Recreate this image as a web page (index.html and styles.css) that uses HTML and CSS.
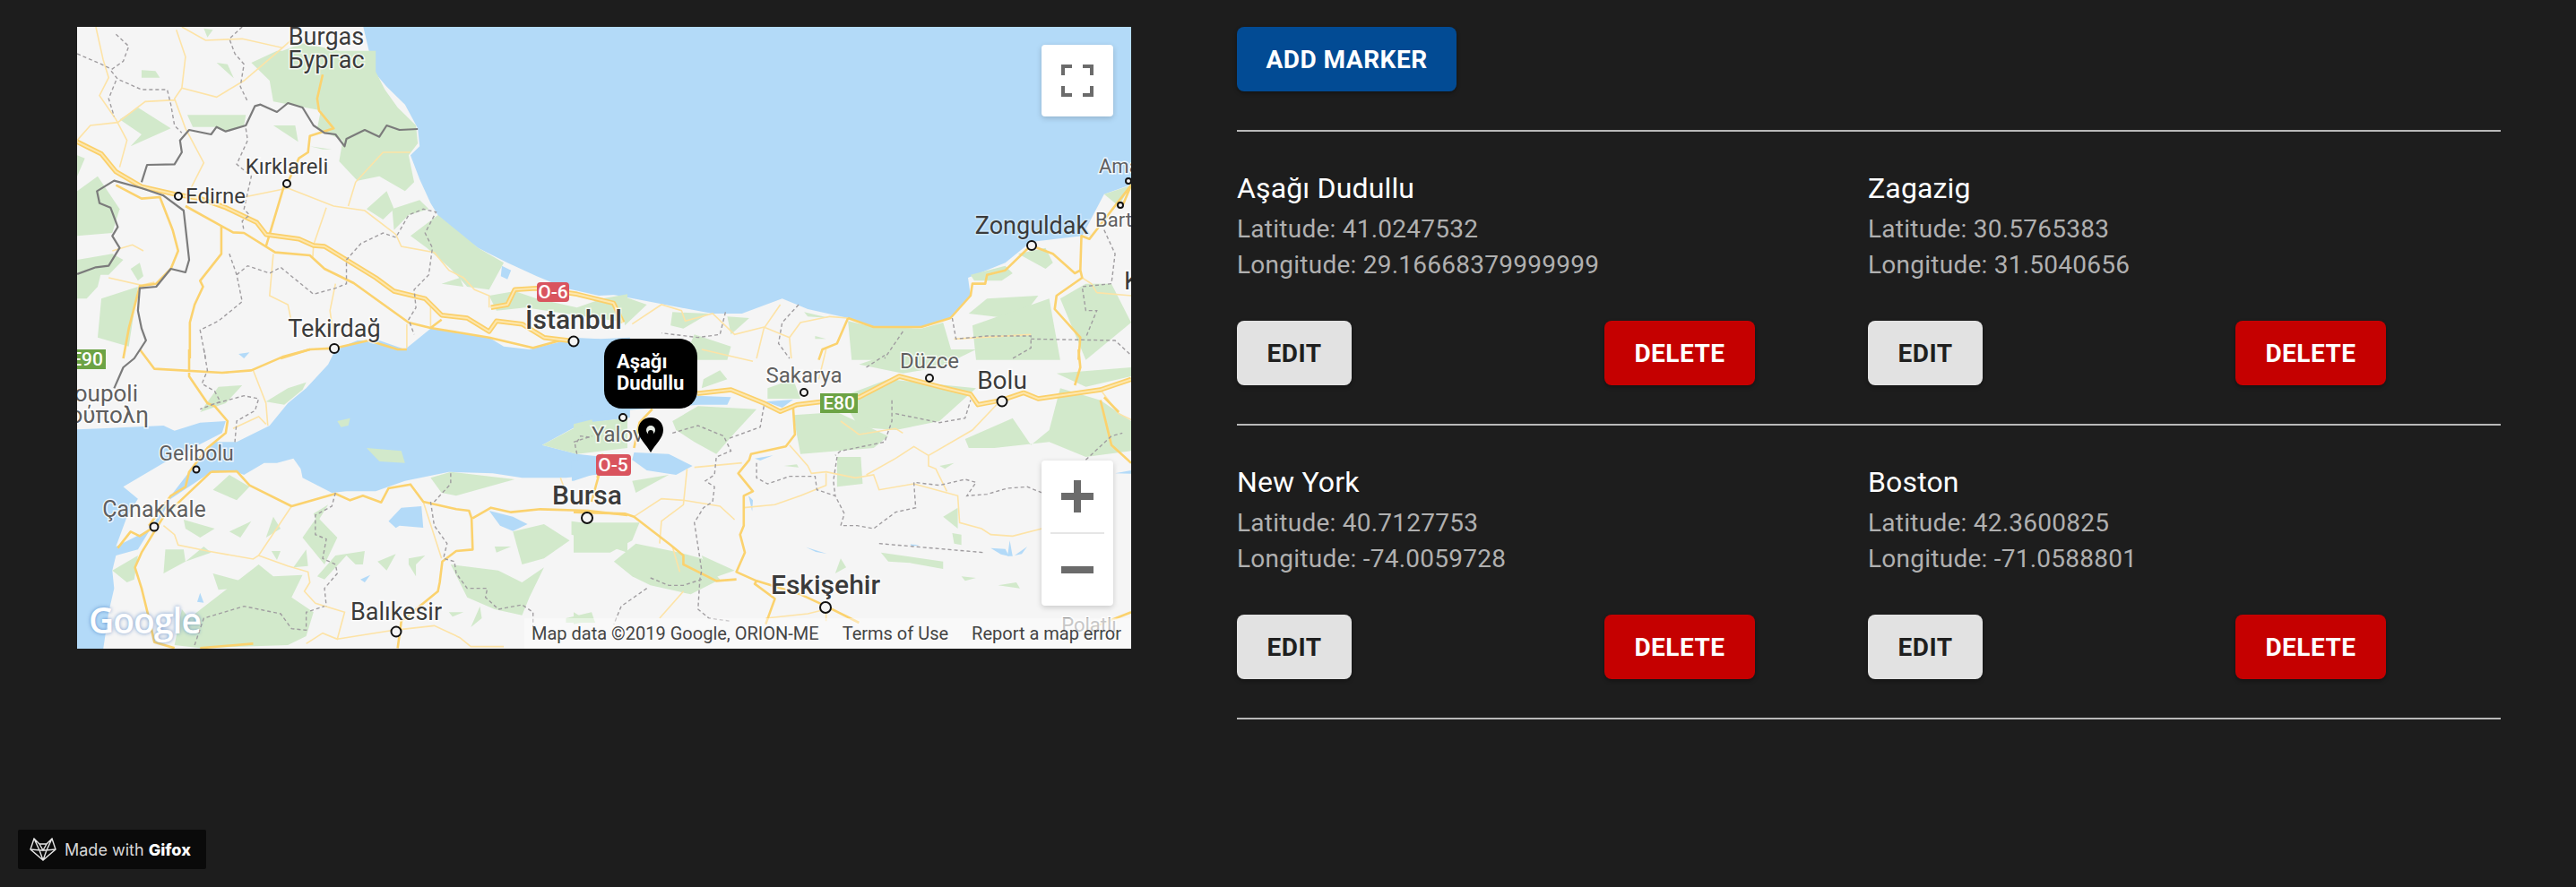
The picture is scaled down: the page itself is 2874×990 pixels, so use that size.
FILE: index.html
```html
<!DOCTYPE html>
<html lang="en">
<head>
<meta charset="utf-8">
<title>Map markers</title>
<link rel="stylesheet" href="styles.css">
</head>
<body>
<main class="page">
  <section class="map">
    <svg class="map-art" viewBox="86 30 1176 694" width="1176" height="694">
      <rect class="land" x="86" y="30" width="1176" height="694"/>
      <g class="water">
        <g transform="translate(60,0) scale(.40816,.33333)">
          <polygon points="845,85 875,240 910,290 960,350 995,430 1000,490 975,520 1000,600 1030,680 1060,740 1160,830 1240,880 1320,925 1400,965 1490,990 1575,985 1575,85"/>
          <polygon points="1225,890 1250,905 1240,935 1222,925"/>
        </g>
        <g transform="translate(640,0) scale(.40816,.33333)">
          <polygon points="-5,965 40,975 100,985 250,1020 380,1050 460,1050 570,1000 640,1035 750,1065 820,1095 950,1095 1030,1065 1085,990 1078,930 1180,880 1250,810 1390,790 1450,650 1530,615 1530,85 -5,85"/>
        </g>
        <g transform="translate(60,390) scale(.40816,.33333)">
          <polygon points="60,268 130,265 300,255 330,272 400,245 470,240 460,280 300,380 190,460 230,500 200,560 170,660 235,620 280,590 320,500 430,410 500,410 520,420 575,380 610,380 655,365 675,400 680,430 760,480 800,475 880,475 960,440 1080,410 1200,415 1280,430 1400,430 1480,420 1568,410 1575,370 1430,350 1335,320 1440,250 1575,228 1575,-40 1400,-30 1300,0 1230,-10 1190,-40 1030,-70 960,0 890,-30 830,-30 770,0 750,50 690,130 640,180 590,255 500,310 440,310 370,410 320,490 270,590 230,670 170,690 160,740 165,800 150,880 135,1005 60,1005"/>
          <polygon points="400,815 410,848 392,845"/>
          <polygon points="838,770 865,755 850,780"/>
          <polygon points="915,575 950,530 1005,525 1010,597 945,590 935,598"/>
          <polygon points="1190,540 1255,560 1295,585 1255,608 1220,590"/>
          <polygon points="505,15 535,10 520,30"/>
        </g>
        <g transform="translate(640,390) scale(.40816,.33333)">
          <polygon points="-5,-40 70,-35 120,0 200,100 338,155 430,160 420,185 340,185 300,190 240,195 130,205 0,225 -5,225"/>
          <polygon points="-5,372 60,360 70,385 50,420 0,440 -5,440"/>
          <polygon points="165,345 260,350 325,390 280,420 200,405 160,370"/>
          <polygon points="525,175 600,168 570,195"/>
          <polygon points="495,365 545,355 510,372"/>
          <polygon points="478,490 490,505 488,542"/>
          <polygon points="635,662 692,684 662,678"/>
          <polygon points="1140,665 1180,668 1190,692 1168,686"/>
          <polygon points="1186,692 1192,640 1200,692"/>
          <polygon points="1205,690 1240,660 1225,685"/>
          <polygon points="1480,415 1524,405 1524,416"/>
          <polygon points="920,652 945,655 925,660"/>
        </g>
      </g>
      <g class="green">
        <g transform="translate(60,0) scale(.40816,.33333)">
          <polygon points="625,170 680,145 740,160 780,170 880,170 880,240 905,300 940,360 990,420 995,480 970,520 985,610 960,640 890,590 830,605 780,540 790,470 720,430 730,370 600,340 590,270 540,210 610,170"/>
          <polygon points="240,235 278,238 290,260 240,260"/>
          <polygon points="445,210 475,215 492,262"/>
          <polygon points="410,95 435,100 420,125"/>
          <polygon points="180,400 230,360 320,430 210,490 240,450"/>
          <polygon points="365,385 525,385 520,420 470,440 440,425 380,425"/>
          <polygon points="600,420 660,420 668,475"/>
          <polygon points="700,490 760,500 735,500"/>
          <polygon points="855,700 910,640 930,700 900,735"/>
          <polygon points="925,700 1000,670 1025,700 970,720 930,770"/>
          <polygon points="975,790 1050,720 1160,830 1230,880 1190,970 1130,960 1085,900 1020,830"/>
          <polygon points="1060,950 1110,930 1120,960"/>
          <polygon points="64,520 85,530 64,590"/>
          <polygon points="64,640 120,590 180,700 160,780 64,790"/>
          <polygon points="64,870 160,850 190,870 150,920 64,920"/>
          <polygon points="64,920 130,910 120,960 90,1000 64,1000"/>
          <polygon points="130,1000 230,960 205,1160 120,1130"/>
          <polygon points="210,900 235,880 245,925 230,940"/>
          <polygon points="1190,990 1260,975 1320,1000 1430,1030 1500,1000 1568,985 1568,1080 1450,1060 1290,1030 1210,1040"/>
        </g>
        <g transform="translate(640,0) scale(.40816,.33333)">
          <polygon points="130,990 200,1020 140,1090"/>
          <polygon points="270,1045 370,1050 300,1100 265,1090"/>
          <polygon points="420,1060 480,1065 430,1120"/>
          <polygon points="330,1120 430,1160 420,1205 300,1205"/>
          <polygon points="630,1045 700,1065 640,1060"/>
          <polygon points="660,1125 690,1135 660,1135"/>
          <polygon points="750,1075 820,1095 950,1100 1010,1080 1040,1205 760,1205"/>
          <polygon points="1085,920 1180,890 1200,915 1170,940 1095,940"/>
          <polygon points="1130,1000 1270,990 1220,1070 1080,1050"/>
          <polygon points="1215,850 1290,830 1310,880 1290,900"/>
          <polygon points="1400,950 1470,950 1524,1080 1400,1205 1330,1000"/>
          <polygon points="1450,650 1524,620 1490,690"/>
          <polygon points="1090,1090 1300,1000 1330,1205 1100,1205"/>
        </g>
        <g transform="translate(60,390) scale(.40816,.33333)">
          <polygon points="400,210 450,125 515,120 470,180"/>
          <polygon points="580,175 640,130 690,110 680,135 630,185"/>
          <polygon points="775,240 810,230 805,255 785,260"/>
          <polygon points="855,330 950,340 960,380 890,375"/>
          <polygon points="435,470 480,420 535,460 500,505"/>
          <polygon points="355,570 440,600 400,630 360,600"/>
          <polygon points="480,610 540,575 510,630"/>
          <polygon points="600,560 620,600 580,630"/>
          <polygon points="595,675 620,675 610,705"/>
          <polygon points="655,730 690,670 695,725"/>
          <polygon points="680,630 720,560 775,630 740,720"/>
          <polygon points="710,550 750,520 720,580"/>
          <polygon points="305,670 355,670 360,710 300,750"/>
          <polygon points="360,710 410,660 430,680"/>
          <polygon points="160,740 230,690 220,770 200,780"/>
          <polygon points="435,750 510,775 530,750 535,795 450,805"/>
          <polygon points="370,900 560,720 600,760 680,755 650,830 710,880 690,960 640,990 400,1000 330,990 350,870"/>
          <polygon points="720,760 770,690 850,675 845,720 825,720 800,690 740,770"/>
          <polygon points="885,710 935,685 910,740"/>
          <polygon points="970,700 1015,690 990,720 990,760 970,720"/>
          <polygon points="1030,430 1085,410 1260,435 1100,490 1060,480"/>
          <polygon points="1085,720 1215,740 1280,780 1340,730 1300,830 1280,890 1205,870 1130,830"/>
          <polygon points="1255,610 1340,585 1410,640 1340,700 1280,720"/>
          <polygon points="1205,660 1250,660 1210,680"/>
          <polygon points="1415,575 1568,600 1568,680 1470,640 1415,620"/>
          <polygon points="1400,900 1470,880 1480,915 1400,915"/>
          <polygon points="1335,320 1450,245 1568,230 1568,330 1430,350"/>
          <polygon points="1165,860 1170,900 1140,930"/>
          <polygon points="1080,880 1120,880 1090,895"/>
        </g>
        <g transform="translate(640,390) scale(.40816,.33333)">
          <polygon points="270,240 340,190 500,200 440,280 390,350 330,310 280,270"/>
          <polygon points="355,100 400,70 420,100 350,130"/>
          <polygon points="600,220 720,210 860,290 820,330 620,350"/>
          <polygon points="720,360 785,360 790,450 720,460"/>
          <polygon points="575,390 610,385 615,395"/>
          <polygon points="730,160 860,100 1100,130 1000,240 880,270 780,260"/>
          <polygon points="780,50 900,0 1100,0 1000,60 900,80"/>
          <polygon points="1070,300 1200,230 1250,320 1300,270 1330,130 1440,170 1524,240 1524,340 1400,360 1300,310 1150,330 1080,330"/>
          <polygon points="1320,80 1524,60 1524,90 1400,125"/>
          <polygon points="1000,390 1040,380 1015,400"/>
          <polygon points="1010,560 1050,530 1050,600"/>
          <polygon points="1035,615 1060,620 1060,655 1040,650"/>
          <polygon points="840,680 1010,710 1010,735 920,715 860,710"/>
          <polygon points="1060,760 1100,765 1070,775"/>
          <polygon points="1160,790 1210,780 1220,800"/>
          <polygon points="715,750 730,700 745,730"/>
          <polygon points="110,710 170,650 290,680 350,700 400,770 320,820 210,790 160,760"/>
          <polygon points="0,580 180,580 160,640 100,680 0,680"/>
          <polygon points="160,440 260,420 170,480"/>
          <polygon points="0,880 40,910 0,920"/>
          <polygon points="350,690 440,740 370,770"/>
          <polygon points="530,130 600,100 620,165 530,165"/>
          <polygon points="0,250 50,235 60,280 0,310"/>
        </g>
      </g>
      <g class="thin">
        <g transform="translate(60,0) scale(.40816,.33333)">
          <path d="M115,90L135,200 150,260 125,320 170,400 200,470 180,560M335,100L360,190 350,295 330,330 360,430 410,545 375,630M350,295L445,325 520,270 625,160 515,130 415,135 350,90M330,335L250,340 175,410 100,420 64,470M625,160L680,100M640,630L520,660M640,630L765,690 850,705 935,785 950,825 1040,845 1080,905 1120,930 1150,970 1190,990 1190,1030M745,695L710,820 708,860M900,510L975,510M900,510L825,610 805,690M600,850L590,990 640,1020 650,1080M770,950L755,1040 765,1130M150,930L240,955 275,945M160,840L215,820 245,840M1030,1020L1030,1100M965,1085L965,1165"/>
        </g>
        <g transform="translate(640,0) scale(.40816,.33333)">
          <path d="M160,1085L240,1020 295,1040 305,1075 380,1050 440,1120 520,1095 590,1130 620,1080 700,1060 750,1065M590,1130L595,1200M500,1200L520,1100 565,1020M1040,1135L1250,1120M1430,980L1524,990M1390,930L1415,950 1430,980"/>
        </g>
        <g transform="translate(60,390) scale(.40816,.33333)">
          <path d="M300,590L330,620 340,655 420,675 545,702 560,690 650,525M560,690L640,725 695,745 700,780 685,810 715,850 795,880 775,970 735,950 690,985M775,970L930,940 1040,925 1110,965 1140,995 1230,995M545,70L580,180 585,255M490,265L560,225 580,250M1010,510L1060,700M1385,430L1400,480"/>
        </g>
        <g transform="translate(640,390) scale(.40816,.33333)">
          <path d="M590,320L640,390 650,415 690,410 770,430 820,420 835,470 930,450 1020,480 1050,490 1055,580 1115,600 1140,620 1200,625 1280,600M800,420L880,365 930,325 970,355 1090,270 1160,180M970,355L970,390 990,400 1020,475M900,280L880,265 780,285 730,240M690,415L690,455 620,490 550,520 465,530M330,395L460,380M310,400L300,520 240,575 235,650M300,505L240,500 165,560M300,505L400,525 440,570M270,660L290,745M525,900L640,885 690,870 690,910M350,0L490,40M1440,135L1490,215 1524,235M235,900L300,810M690,0L670,100"/>
        </g>
      </g>
      <g class="road">
        <g transform="translate(60,0) scale(.40816,.33333)">
          <path d="M360,690L490,778 520,780 605,845 700,855 740,900 820,948 970,1080 1030,1098 1060,1070M1030,1098L1190,1130 1310,1165 1400,1135M630,620L580,825M170,620L240,665 290,660 325,770 340,840 320,900 280,950 235,958 205,1100 190,1200M458,755L458,850 400,940 408,960 385,1020 372,1080 372,1200M735,250L720,330 725,370 765,430 700,455 695,510 670,530 640,610M620,1200L700,1170 767,1166 860,1140 940,1170 965,1170"/>
        </g>
        <g transform="translate(640,0) scale(.40816,.33333)">
          <path d="M750,1065L720,1150 680,1170 670,1205M750,1065L820,1095 950,1095 1030,1065 1085,990 1090,950 1125,950 1130,920 1180,905 1250,822 1310,850 1370,915 1385,905 1390,930 1320,990 1315,1035 1385,1130 1380,1205M1385,905L1388,790 1410,800 1524,620 1500,690"/>
        </g>
        <g transform="translate(60,390) scale(.40816,.33333)">
          <path d="M235,0L275,65 460,78 540,70 625,25 700,0M370,0L370,90 420,180 440,190 475,240 470,280 420,330 370,410 360,460 320,490 260,590M175,665L210,610 235,625 280,590M430,410L500,408 535,455 650,525 770,483 810,505 845,490 895,512 915,465 975,452 1010,510 1100,535 1135,540 1142,565 1145,670 1100,675 1062,710 1055,780 1050,810 990,870 950,910 940,1000M430,410L300,560 240,680 222,730 240,800 260,900 275,980 330,1000M1145,565L1195,530 1250,545 1330,535 1460,540 1568,555M545,985L400,1000M1490,420L1470,510"/>
        </g>
        <g transform="translate(640,390) scale(.40816,.33333)">
          <path d="M600,195L605,285 580,325 485,350 480,370 450,415 490,475 465,490 465,590 455,620 468,680 445,745 500,775 620,820 690,860 780,915M0,545L140,550 165,560 265,655 300,690 300,720 390,775 445,770M500,775L495,785 550,835 525,920M215,200L180,245 165,330M65,430L80,350M1440,170L1470,320 1524,380M1524,880L1410,935M1380,0L1385,60 1370,120M1450,160L1490,210"/>
        </g>
      </g>
      <g class="motor-o">
        <g transform="translate(60,0) scale(.40816,.33333)">
          <path d="M64,475L130,515 170,575 240,625 330,650 400,665 470,695 555,745 580,785 670,800 710,822 740,825 800,870 880,930 930,975 1015,1000 1060,1055 1130,1065 1190,1110 1210,1075 1280,1085 1340,1130 1421,1142"/>
          <path d="M1195,1030L1240,1020 1260,970 1320,965 1430,985 1530,1015 1555,1080"/>
        </g>
        <g transform="translate(640,390) scale(.40816,.33333)">
          <path d="M338,148L430,135 520,180 565,208 610,185 780,160 890,90 1000,125 1085,150 1105,185 1170,170 1230,145 1270,165 1440,135 1524,100"/>
        </g>
      </g>
      <g class="motor-i">
        <g transform="translate(60,0) scale(.40816,.33333)">
          <path d="M64,475L130,515 170,575 240,625 330,650 400,665 470,695 555,745 580,785 670,800 710,822 740,825 800,870 880,930 930,975 1015,1000 1060,1055 1130,1065 1190,1110 1210,1075 1280,1085 1340,1130 1421,1142"/>
          <path d="M1195,1030L1240,1020 1260,970 1320,965 1430,985 1530,1015 1555,1080"/>
        </g>
        <g transform="translate(640,390) scale(.40816,.33333)">
          <path d="M338,148L430,135 520,180 565,208 610,185 780,160 890,90 1000,125 1085,150 1105,185 1170,170 1230,145 1270,165 1440,135 1524,100"/>
        </g>
      </g>
      <g class="dash">
        <g transform="translate(60,0) scale(.40816,.33333)">
          <path d="M170,115L205,155 190,205 155,235 175,265 240,300 310,300 320,350 330,420 350,445M170,270L150,330 165,390M515,90L480,130 495,180 520,215 510,290 530,340M525,430L530,470 500,550 540,590 520,700 535,720 515,740 520,775M64,180L130,215 155,230M480,850L500,920 515,1010 450,1075 400,1105 415,1200M500,920L530,890 590,915 620,895 710,985 770,965 800,950 800,870 840,815 900,780 935,795 970,720 1010,700 1045,710 1015,780 1035,830 1025,920 985,970 990,1030 970,1070 985,1120"/>
        </g>
        <g transform="translate(640,0) scale(.40816,.33333)">
          <path d="M615,1020L570,1080 560,1150 590,1200M415,1045L400,1120 340,1130 240,1115M1035,1065L1045,1135 1130,1125 1250,1125 1250,1165 1200,1200M1250,1135L1480,1140 1524,1190M1450,770L1480,850 1470,950 1390,960 1400,1040 1430,1040 1400,1130M900,1110L850,1200"/>
        </g>
        <g transform="translate(60,390) scale(.40816,.33333)">
          <path d="M410,0L420,70 405,115 440,140 455,175 400,200M430,185L520,155 560,165 550,205 500,240 495,310M770,480L760,525 715,555 715,620 745,635 735,700 770,720 775,750 740,800 745,860M1030,510L1040,590 1075,650 1065,700 1095,710 1100,750 1130,800 1185,800 1180,830 1215,870 1280,855 1310,880 1310,930M385,990L410,900 520,860 620,885 650,935 690,940 690,880 740,860M1085,415L1085,450 1055,490 1040,510M1430,350L1425,320 1440,290 1470,295"/>
        </g>
        <g transform="translate(640,390) scale(.40816,.33333)">
          <path d="M0,310L50,290M270,280L340,255 410,290 430,340 390,360 385,420 360,440 385,460 380,510 355,530 330,580 340,660 350,740 345,770 340,870 370,900 430,910M500,380L500,430 530,450 590,425 660,425 665,470 715,490 740,550 730,590 775,590 820,600 880,545 935,530 930,445 1000,455 1070,435 1100,445 1075,490 1130,485 1185,465 1240,460 1280,480M720,360L710,440 715,490M520,190L510,260 420,300M870,170L870,240 850,310 730,340 715,355M880,215L1000,245 1070,230 1085,170M800,60L850,20M1400,370L1470,290 1500,280M210,765L260,790 300,790 350,770M200,800L130,860 110,920M835,650L1120,680"/>
        </g>
      </g>
      <g class="border">
        <g transform="translate(60,0) scale(.40816,.33333)">
          <path d="M64,918L115,895 150,890 180,830 160,790 175,760 155,695 125,680 118,640 165,605 240,630 300,655 355,705 370,870 360,912 320,900 280,960 235,965 230,1040 240,1100 252,1140 220,1200 190,1230 165,1300"/>
          <path d="M240,610L255,552 330,550 350,510 345,470 370,435 430,450 445,425 470,440 525,420 550,355 565,350 610,375 640,345 680,360 710,420 740,445 770,450 795,490 800,465 850,435 890,458 910,420 945,435 995,432"/>
        </g>
      </g>
      <g class="labels">
        <text class="l27 mid" x="364" y="50">Burgas</text>
        <text class="l27 mid" x="364" y="76">Бургас</text>
        <text class="l24 mid" x="320" y="194">Kırklareli</text>
        <text class="l24" x="207" y="227">Edirne</text>
        <text class="l27 mid" x="373" y="376">Tekirdağ</text>
        <text class="l30 mid" x="640" y="367">İstanbul</text>
        <text class="l27 mid blue" x="1151" y="261">Zonguldak</text>
        <text class="l22 pale" x="1226" y="193">Ama</text>
        <text class="l22 pale" x="1222" y="253">Bart</text>
        <text class="l28" x="1254" y="323">K</text>
        <text class="l24 pale mid" x="1037" y="411">Düzce</text>
        <text class="l24 pale mid" x="897" y="427">Sakarya</text>
        <text class="l28 mid" x="1118" y="434">Bolu</text>
        <text class="l24 pale" x="660" y="493">Yalov</text>
        <text class="l30 mid" x="655" y="563">Bursa</text>
        <text class="l30 mid" x="921" y="663">Eskişehir</text>
        <text class="l27 mid" x="442" y="692">Balıkesir</text>
        <text class="l25 pale mid" x="172" y="577">Çanakkale</text>
        <text class="l23 pale mid" x="219" y="514">Gelibolu</text>
        <text class="l26 pale end" x="154" y="448">roupoli</text>
        <text class="l26 pale end" x="166" y="472">ούπολη</text>
        <text class="l22 faint mid" x="1215" y="705">Polatlı</text>
      </g>
      <g class="dots">
        <circle cx="320" cy="205" r="4"/><circle cx="199" cy="219" r="4"/><circle cx="373" cy="389" r="5"/>
        <circle cx="640" cy="381" r="5.5"/><circle cx="1151" cy="274" r="5"/><circle cx="1259" cy="202" r="3"/>
        <circle cx="1250" cy="229" r="3"/><circle cx="897" cy="438" r="4"/><circle cx="1037" cy="422" r="4"/>
        <circle cx="1118" cy="448" r="5.5"/><circle cx="695" cy="466" r="4"/><circle cx="655" cy="578" r="6"/>
        <circle cx="921" cy="678" r="6"/><circle cx="219" cy="524" r="3.5"/><circle cx="172" cy="588" r="4.5"/>
        <circle cx="442" cy="705" r="5.5"/>
      </g>
      <g class="shield">
        <rect class="red" x="599" y="315" width="36" height="22" rx="4"/>
        <text x="617" y="333">O-6</text>
        <rect class="red" x="665" y="507" width="39" height="24" rx="4"/>
        <text x="684" y="526">O-5</text>
        <rect class="grn" x="915" y="439" width="42" height="22"/>
        <text x="936" y="457">E80</text>
        <rect class="grn" x="70" y="390" width="48" height="22"/>
        <text class="clip-e" x="97" y="408">E90</text>
      </g>
      <path class="pin" d="M726 466c-8 0-14 6-14 14 0 9 9 16 14 25 5-9 14-16 14-25 0-8-6-14-14-14z"/>
      <circle class="pin-dot" cx="726" cy="480" r="5"/>
      <circle class="pin" cx="726" cy="483" r="3"/>
    </svg>

    <div class="bubble">Aşağı<br>Dudullu</div>

    <button class="ctl ctl-full" aria-label="Toggle fullscreen">
      <svg width="36" height="36" viewBox="0 0 36 36"><path d="M0 12V0h12v4H4v8zM24 0h12v12h-4V4h-8zM0 24h4v8h8v4H0zM32 24h4v12H24v-4h8z"/></svg>
    </button>
    <div class="ctl ctl-zoom">
      <button class="zbtn" aria-label="Zoom in"><svg width="36" height="36" viewBox="0 0 36 36"><path d="M14 0h8v14h14v8H22v14h-8V22H0v-8h14z"/></svg></button>
      <span class="zsep"></span>
      <button class="zbtn" aria-label="Zoom out"><svg width="36" height="8" viewBox="0 0 36 8"><path d="M0 0h36v8H0z"/></svg></button>
    </div>

    <div class="google">Google</div>
    <div class="attrib">
      <span>Map data ©2019 Google, ORION-ME</span>
      <span>Terms of Use</span>
      <span>Report a map error</span>
    </div>
  </section>

  <section class="panel">
    <button class="btn btn-add">Add marker</button>
    <hr class="rule">
    <div class="row">
      <article class="card">
        <h3 class="name">Aşağı Dudullu</h3>
        <p class="coord">Latitude: 41.0247532</p>
        <p class="coord">Longitude: 29.16668379999999</p>
        <div class="actions"><button class="btn btn-edit">Edit</button><button class="btn btn-del">Delete</button></div>
      </article>
      <article class="card">
        <h3 class="name">Zagazig</h3>
        <p class="coord">Latitude: 30.5765383</p>
        <p class="coord">Longitude: 31.5040656</p>
        <div class="actions"><button class="btn btn-edit">Edit</button><button class="btn btn-del">Delete</button></div>
      </article>
    </div>
    <hr class="rule">
    <div class="row">
      <article class="card">
        <h3 class="name">New York</h3>
        <p class="coord">Latitude: 40.7127753</p>
        <p class="coord">Longitude: -74.0059728</p>
        <div class="actions"><button class="btn btn-edit">Edit</button><button class="btn btn-del">Delete</button></div>
      </article>
      <article class="card">
        <h3 class="name">Boston</h3>
        <p class="coord">Latitude: 42.3600825</p>
        <p class="coord">Longitude: -71.0588801</p>
        <div class="actions"><button class="btn btn-edit">Edit</button><button class="btn btn-del">Delete</button></div>
      </article>
    </div>
    <hr class="rule">
  </section>
</main>

<div class="gifox">
  <svg class="fox" width="30" height="26" viewBox="0 0 30 26">
    <path d="M5 1l6 6h8l6-6 4 12-14 12L1 13zM5 1l6 13-10-1M25 1l-6 13 10-1M11 7l4 7 4-7M11 14h8M11 14l4 11 4-11"/>
  </svg>
  <span class="gifox-text">Made with <b>Gifox</b></span>
</div>
</body>
</html>
```
FILE: styles.css
```css
* { box-sizing: border-box; }
html, body { margin: 0; padding: 0; }
body {
  background: #1d1d1d;
  font-family: Roboto, "Liberation Sans", sans-serif;
  height: 990px;
  overflow: hidden;
}
.page { display: flex; gap: 118px; padding: 30px 0 0 86px; }

/* map */
.map { position: relative; width: 1176px; height: 694px; overflow: hidden; flex: none; }
.map-art { display: block; }
.map-art path, .map-art polygon { vector-effect: non-scaling-stroke; }
.land { fill: #f5f5f5; }
.water { fill: #b3daf8; }
.green { fill: #d2e9cb; }
.thin path { fill: none; stroke: #fde3a6; stroke-width: 1.6; }
.road path { fill: none; stroke: #fbd26e; stroke-width: 2.6; stroke-linejoin: round; }
.motor-o path { fill: none; stroke: #fbd06a; stroke-width: 5.5; stroke-linejoin: round; }
.motor-i path { fill: none; stroke: #fde7ae; stroke-width: 2; stroke-linejoin: round; }
.dash path { fill: none; stroke: #a09da0; stroke-width: 1.4; stroke-dasharray: 4 3; }
.border path { fill: none; stroke: #7b7b7b; stroke-width: 2.2; stroke-linejoin: round; }
.labels text {
  font-family: Roboto, sans-serif;
  fill: #3b3b3b;
  stroke: #fff;
  stroke-opacity: .75;
  stroke-width: 3px;
  paint-order: stroke;
}
.labels .mid { text-anchor: middle; }
.labels .end { text-anchor: end; }
.labels .pale { fill: #5f5f5f; }
.labels .faint { fill: #9a9a9a; }
.labels .blue { stroke: #d5ebfb; }
.l22 { font-size: 22px; }
.l23 { font-size: 23px; }
.l24 { font-size: 24px; }
.l25 { font-size: 25px; }
.l26 { font-size: 26px; }
.l27 { font-size: 27px; }
.l28 { font-size: 28px; }
.l30 { font-size: 30px; font-weight: 500; }
.dots circle { fill: #f5f5f5; stroke: #111; stroke-width: 2; }
.shield rect.red { fill: #d9545e; }
.shield rect.grn { fill: #6ca345; }
.shield text {
  fill: #fff;
  font-family: Roboto, sans-serif;
  font-size: 21px;
  font-weight: 500;
  text-anchor: middle;
}
.pin { fill: #000; }
.pin-dot { fill: #e6ece6; }

.bubble {
  position: absolute;
  left: 588px;
  top: 348px;
  width: 104px;
  height: 78px;
  padding: 14px 14px 0;
  background: #000;
  border-radius: 20px;
  color: #fff;
  font-size: 22px;
  font-weight: 700;
  line-height: 24px;
}
.ctl {
  position: absolute;
  left: 1076px;
  width: 80px;
  background: #fff;
  border: 0;
  border-radius: 4px;
  box-shadow: 0 2px 6px rgba(0, 0, 0, .18);
  padding: 0;
}
.ctl svg { display: block; fill: #6b6b6b; }
.ctl-full { top: 20px; height: 80px; display: flex; align-items: center; justify-content: center; }
.ctl-zoom { top: 484px; height: 162px; display: flex; flex-direction: column; align-items: center; }
.zbtn { width: 80px; height: 80px; background: none; border: 0; padding: 0; display: flex; align-items: center; justify-content: center; }
.zsep { width: 60px; height: 2px; flex: none; background: #e6e6e6; }
.google {
  position: absolute;
  left: 13px;
  top: 637px;
  font-family: "Open Sans", sans-serif;
  font-size: 39px;
  font-weight: 600;
  letter-spacing: -1px;
  line-height: 50px;
  color: #fff;
  text-shadow: 0 0 4px rgba(70, 120, 190, .75);
}
.attrib {
  position: absolute;
  right: 0;
  bottom: 0;
  height: 34px;
  padding: 0 11px 0 8px;
  display: flex;
  gap: 26px;
  align-items: center;
  font-size: 20px;
  line-height: 34px;
  color: #444;
  background: rgba(255, 255, 255, .45);
}

/* panel */
.panel { width: 1410px; flex: none; }
.btn {
  display: block;
  height: 72px;
  padding: 0;
  border: 0;
  border-radius: 8px;
  font-family: Roboto, sans-serif;
  font-size: 28px;
  font-weight: 700;
  letter-spacing: .5px;
  text-transform: uppercase;
  box-shadow: 0 2px 4px rgba(0, 0, 0, .35);
}
.btn-add { width: 245px; background: #024b94; color: #fff; }
.btn-edit { width: 128px; background: #e2e2e2; color: #1f1f1f; }
.btn-del { width: 168px; background: #c50000; color: #fff; }
.rule { margin: 43px 0 0; border: 0; height: 2px; background: #b9b9b9; }
.row { display: grid; grid-template-columns: 704px 704px; padding-top: 43px; }
.row + .rule { margin-top: 43px; }
.card { width: 578px; }
.name { margin: 0; font-size: 32px; font-weight: 400; letter-spacing: .15px; line-height: 40px; color: #fff; }
.coord { margin: 6px 0 -6px; font-size: 28px; letter-spacing: .25px; line-height: 40px; color: #b0b0b0; }
.coord + .coord { margin-top: 6px; }
.actions { display: flex; justify-content: space-between; margin-top: 48px; }

/* watermark */
.gifox {
  position: fixed;
  left: 20px;
  top: 926px;
  width: 210px;
  height: 44px;
  display: flex;
  align-items: center;
  gap: 9px;
  padding-left: 13px;
  background: #0a0a0a;
  border-radius: 2px;
}
.fox { fill: none; stroke: #e6e6e6; stroke-width: 1.4; flex: none; }
.gifox-text { font-family: Inter, sans-serif; font-size: 18px; color: #d8d8d8; white-space: nowrap; }
.gifox-text b { color: #fff; font-weight: 800; }
```
